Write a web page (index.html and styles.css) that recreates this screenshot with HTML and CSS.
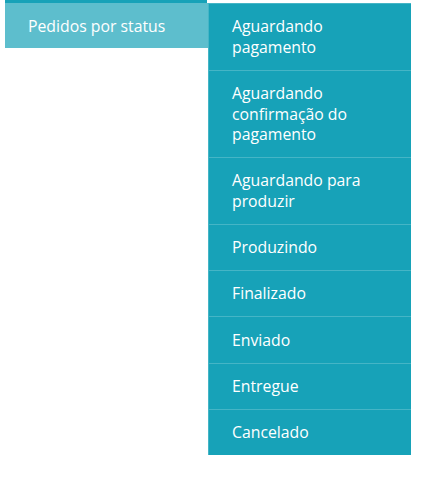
FILE: index.html
```html
<!DOCTYPE html>
<html lang="pt-BR">
<head>
    <meta charset="UTF-8">
    <meta name="viewport" content="width=device-width, initial-scale=1.0">
    <title>Pedidos</title>
    <link rel="stylesheet" href="styles.css">
</head>
<body>
    <nav class="sidebar">
        <div class="menu-edge"></div>
        <ul class="menu">
            <li class="menu-item open">
                <a href="#" class="menu-link">Pedidos por status</a>
                <ul class="submenu">
                    <li><a href="#">Aguardando pagamento</a></li>
                    <li><a href="#">Aguardando confirmação do pagamento</a></li>
                    <li><a href="#">Aguardando para produzir</a></li>
                    <li><a href="#">Produzindo</a></li>
                    <li><a href="#">Finalizado</a></li>
                    <li><a href="#">Enviado</a></li>
                    <li><a href="#">Entregue</a></li>
                    <li><a href="#">Cancelado</a></li>
                </ul>
            </li>
        </ul>
    </nav>
</body>
</html>
```

FILE: styles.css
```css
html, body {
    min-height: 486px;
}
body {
    margin: 0;
    padding: 0;
    background-color: #fff;
    font-family: 'Open Sans', 'DejaVu Sans', sans-serif;
    font-size: 15.8px;
    line-height: 20.5px;
    color: #fff;
}
.sidebar {
    padding-left: 5px;
}
.menu-edge {
    height: 3px;
    width: 202px;
    background-color: #17a2b8;
}
.menu {
    list-style: none;
    margin: 0;
    padding: 0;
}
.menu-item {
    display: flex;
    align-items: flex-start;
}
.menu-link {
    display: block;
    width: 203px;
    box-sizing: border-box;
    padding: 12.5px 10px 12px 23px;
    background-color: #5dbecd;
    color: #fff;
    text-decoration: none;
}
.submenu {
    width: 202px;
    list-style: none;
    margin: 0;
    padding: 0;
    background-color: #17a2b8;
    border-top: 1px solid #45b5c6;
    border-left: 1px solid #45b5c6;
}
.submenu li {
    border-bottom: 1px solid #45b5c6;
}
.submenu li:last-child {
    border-bottom: none;
}
.submenu a {
    display: block;
    padding: 12.375px 24px 12.375px 23px;
    color: #fff;
    text-decoration: none;
}
```
